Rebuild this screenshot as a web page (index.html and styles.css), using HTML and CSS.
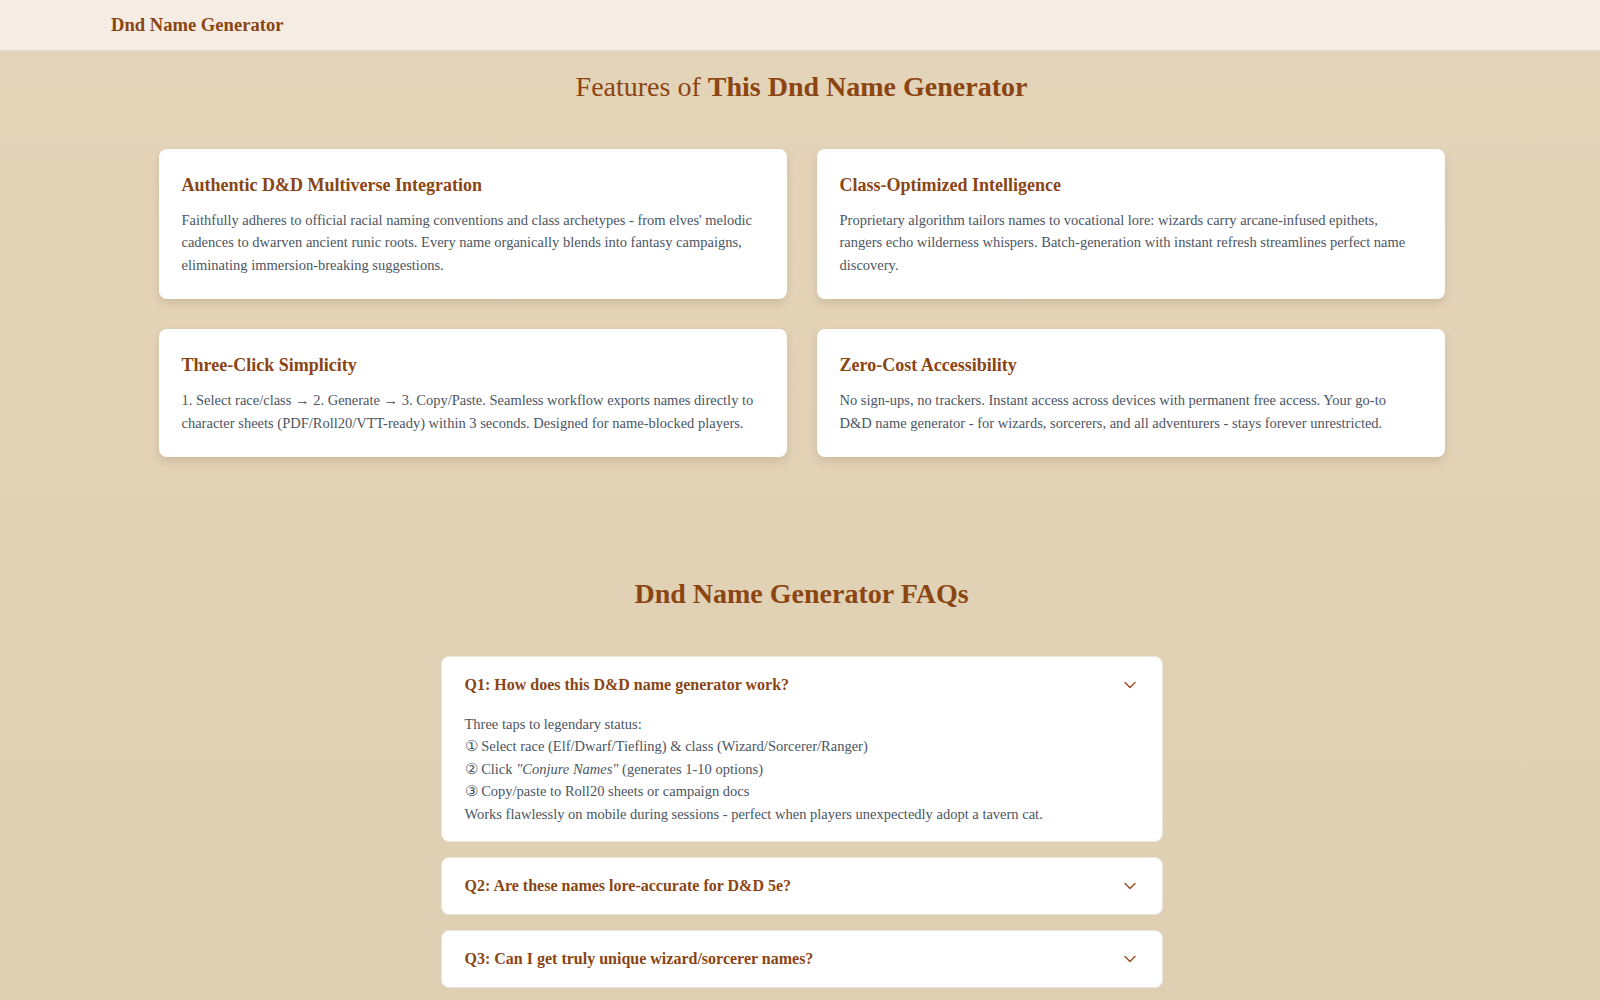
FILE: index.html
```html
<!DOCTYPE html>
<html lang="en">
<head>
<meta charset="utf-8">
<title>Dnd Name Generator</title>
<link rel="stylesheet" href="styles.css">
</head>
<body>
<header class="site-header">
  <div class="header-inner">
    <a class="brand" href="#">Dnd Name Generator</a>
  </div>
</header>
<main class="page">
  <section class="features">
    <h2 class="section-title">Features of <strong>This Dnd Name Generator</strong></h2>
    <div class="feature-grid">
      <article class="card">
        <h3 class="card-title">Authentic D&amp;D Multiverse Integration</h3>
        <p class="card-text">Faithfully adheres to official racial naming conventions and class archetypes - from elves' melodic cadences to dwarven ancient runic roots. Every name organically blends into fantasy campaigns, eliminating immersion-breaking suggestions.</p>
      </article>
      <article class="card">
        <h3 class="card-title">Class-Optimized Intelligence</h3>
        <p class="card-text">Proprietary algorithm tailors names to vocational lore: wizards carry arcane-infused epithets, rangers echo wilderness whispers. Batch-generation with instant refresh streamlines perfect name discovery.</p>
      </article>
      <article class="card">
        <h3 class="card-title">Three-Click Simplicity</h3>
        <p class="card-text">1. Select race/class → 2. Generate → 3. Copy/Paste. Seamless workflow exports names directly to character sheets (PDF/Roll20/VTT-ready) within 3 seconds. Designed for name-blocked players.</p>
      </article>
      <article class="card">
        <h3 class="card-title">Zero-Cost Accessibility</h3>
        <p class="card-text">No sign-ups, no trackers. Instant access across devices with permanent free access. Your go-to D&amp;D name generator - for wizards, sorcerers, and all adventurers - stays forever unrestricted.</p>
      </article>
    </div>
  </section>

  <section class="faq">
    <h2 class="faq-title">Dnd Name Generator FAQs</h2>
    <div class="faq-list">
      <div class="faq-item">
        <button class="faq-q" type="button">
          <span>Q1: How does this D&amp;D name generator work?</span>
          <svg class="chev" viewBox="0 0 24 24" width="20" height="20" fill="none" stroke="currentColor" stroke-width="1.8" stroke-linecap="round" stroke-linejoin="round"><path d="m6 9 6 6 6-6"/></svg>
        </button>
        <div class="faq-a">
          Three taps to legendary status:<br>
          ① Select race (Elf/Dwarf/Tiefling) &amp; class (Wizard/Sorcerer/Ranger)<br>
          ② Click <em>"Conjure Names"</em> (generates 1-10 options)<br>
          ③ Copy/paste to Roll20 sheets or campaign docs<br>
          Works flawlessly on mobile during sessions - perfect when players unexpectedly adopt a tavern cat.
        </div>
      </div>
      <div class="faq-item">
        <button class="faq-q" type="button">
          <span>Q2: Are these names lore-accurate for D&amp;D 5e?</span>
          <svg class="chev" viewBox="0 0 24 24" width="20" height="20" fill="none" stroke="currentColor" stroke-width="1.8" stroke-linecap="round" stroke-linejoin="round"><path d="m6 9 6 6 6-6"/></svg>
        </button>
      </div>
      <div class="faq-item">
        <button class="faq-q" type="button">
          <span>Q3: Can I get truly unique wizard/sorcerer names?</span>
          <svg class="chev" viewBox="0 0 24 24" width="20" height="20" fill="none" stroke="currentColor" stroke-width="1.8" stroke-linecap="round" stroke-linejoin="round"><path d="m6 9 6 6 6-6"/></svg>
        </button>
      </div>
    </div>
  </section>
</main>
</body>
</html>
```

FILE: styles.css
```css
* { box-sizing: border-box; }

html, body {
  margin: 0;
  padding: 0;
}

body {
  font-family: "Liberation Serif", "Times New Roman", serif;
  color: #4b5563;
  background: linear-gradient(180deg, #e4d4b9 0%, #dfcfb2 100%);
  min-height: 100vh;
}

.site-header {
  background: #f5ede3;
  border-bottom: 1px solid #e6ddd0;
  height: 51px;
}

.header-inner {
  max-width: 1378px;
  margin: 0 auto;
  height: 100%;
  display: flex;
  align-items: center;
}

.brand {
  color: #8b4513;
  font-weight: 700;
  font-size: 18.6px;
  text-decoration: none;
}

.page {
  padding-left: 3px;
}

.features {
  max-width: 1286px;
  margin: 0 auto;
  padding-top: 19px;
}

.section-title {
  margin: 0;
  text-align: center;
  font-size: 28px;
  line-height: 34px;
  font-weight: 400;
  color: #8b4513;
}

.section-title strong { font-weight: 700; }

.feature-grid {
  display: grid;
  grid-template-columns: 1fr 1fr;
  gap: 30px;
  margin-top: 45px;
}

.card {
  background: #fff;
  border-radius: 8px;
  box-shadow: 0 4px 8px rgba(90, 60, 20, 0.15);
  padding: 24px 23px 23px 23px;
}

.card-title {
  margin: 0 0 12px;
  font-size: 18px;
  line-height: 24px;
  font-weight: 700;
  color: #8b4513;
}

.card-text {
  margin: 0;
  font-size: 14.5px;
  line-height: 22.4px;
}

.faq {
  padding-top: 120px;
  padding-bottom: 40px;
}

.faq-title {
  margin: 0;
  text-align: center;
  font-size: 28px;
  line-height: 34px;
  font-weight: 700;
  color: #8b4513;
}

.faq-list {
  width: 722px;
  margin: 45px auto 0;
  display: flex;
  flex-direction: column;
  gap: 15px;
}

.faq-item {
  background: #fff;
  border: 1px solid #e8e4de;
  border-radius: 8px;
}

.faq-q {
  width: 100%;
  display: flex;
  align-items: center;
  justify-content: space-between;
  background: none;
  border: 0;
  padding: 16px 22px 16px 23px;
  font-family: inherit;
  font-size: 16px;
  line-height: 24px;
  font-weight: 700;
  color: #8b4513;
  text-align: left;
  cursor: pointer;
}

.chev {
  color: #a0522d;
  flex: none;
}

.faq-a {
  padding: 0 24px 16px 23px;
  font-size: 14.5px;
  line-height: 22.4px;
  color: #4b5563;
}
```
